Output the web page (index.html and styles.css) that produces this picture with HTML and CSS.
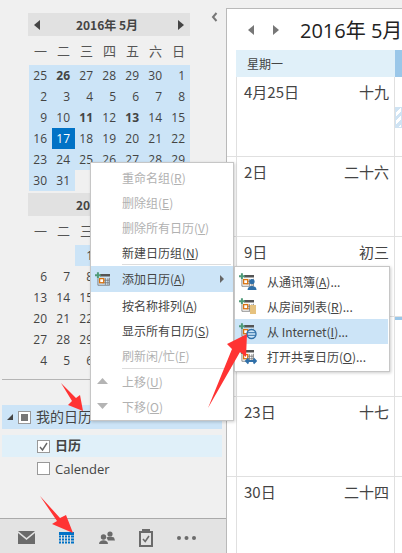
FILE: index.html
```html
<!DOCTYPE html>
<html lang="zh-CN">
<head>
    <meta charset="UTF-8">
    <meta name="viewport" content="width=device-width, initial-scale=1.0">
    <title>日历</title>
    <link rel="stylesheet" href="styles.css">
</head>
<body>
    <svg class="defs" width="0" height="0">
        <symbol id="base-cal" viewBox="0 0 18 16">
            <rect x="6" y="2" width="12" height="3" fill="#555"/>
            <path d="M3.500 7.500v8h14v-9M9 9.500h8M9 12.500h8M12.500 7v8M15.500 7v8" stroke="#777" stroke-width="1" fill="none"/>
            <rect x="5.500" y="7.500" width="5" height="5" fill="#fff" stroke="#d9720f" stroke-width="1.600"/>
            <path d="M0 3.500h7M3.500 0v7" stroke="#4f9a78" stroke-width="2.400" fill="none"/>
        </symbol>
    </svg>

    <div id="sidebar">
        <div class="cal">
            <div class="cal-head">
                <svg class="cal-arrow" width="6" height="10"><path d="M6 0v10L0 5z"/></svg>
                <span class="cal-title">2016年 5月</span>
                <svg class="cal-arrow" width="6" height="10"><path d="M0 0v10l6-5z"/></svg>
            </div>
            <div class="weekdays"><span>一</span><span>二</span><span>三</span><span>四</span><span>五</span><span>六</span><span>日</span></div>
            <div class="dates">
                <span class="on">25</span><span class="on bold">26</span><span class="on">27</span><span class="on">28</span><span class="on">29</span><span class="on">30</span><span class="on">1</span>
                <span class="on">2</span><span class="on">3</span><span class="on">4</span><span class="on">5</span><span class="on">6</span><span class="on">7</span><span class="on">8</span>
                <span class="on">9</span><span class="on">10</span><span class="on bold">11</span><span class="on">12</span><span class="on bold">13</span><span class="on">14</span><span class="on">15</span>
                <span class="on">16</span><span class="today">17</span><span class="on">18</span><span class="on">19</span><span class="on">20</span><span class="on">21</span><span class="on">22</span>
                <span class="on">23</span><span class="on">24</span><span class="on">25</span><span class="on">26</span><span class="on">27</span><span class="on">28</span><span class="on">29</span>
                <span class="on">30</span><span class="on">31</span><span></span><span></span><span></span><span></span><span></span>
            </div>
        </div>
        <div class="cal cal-second">
            <div class="cal-head">
                <span class="cal-spacer"></span>
                <span class="cal-title">2016年 6月</span>
                <span class="cal-spacer"></span>
            </div>
            <div class="weekdays"><span>一</span><span>二</span><span>三</span></div>
            <!-- the days from thursday on sit behind the menu -->
            <div class="dates">
                <span></span><span></span><span class="on">1</span><span></span><span></span><span></span><span></span>
                <span>6</span><span>7</span><span>8</span><span></span><span></span><span></span><span></span>
                <span>13</span><span>14</span><span>15</span><span></span><span></span><span></span><span></span>
                <span>20</span><span>21</span><span>22</span><span></span><span></span><span></span><span></span>
                <span>27</span><span>28</span><span>29</span><span></span><span></span><span></span><span></span>
                <span>4</span><span>5</span><span>6</span><span></span><span></span><span></span><span></span>
            </div>
        </div>

        <div class="divider"></div>

        <div class="group">
            <svg class="twist" width="6" height="6"><path d="M6 0v6H0z"/></svg>
            <span class="check check-mixed"></span>
            <span class="group-name">我的日历</span>
        </div>
        <div class="item item-on">
            <span class="check">
                <svg width="11" height="11" viewBox="0 0 11 11"><path d="M2 6l2.500 3L9 2" stroke="#666" stroke-width="1.400" fill="none"/></svg>
            </span>
            <b>日历</b>
        </div>
        <div class="item">
            <span class="check"></span>
            <span class="latin">Calender</span>
        </div>

        <div id="nav">
            <svg width="17" height="13" viewBox="0 0 17 13"><path d="M0 0h17L8.500 7z" fill="#6b6b6b"/><path d="M0 2v11h17V2L8.500 9z" fill="#6b6b6b"/></svg>
            <svg width="15" height="12" viewBox="0 0 15 12"><rect width="15" height="3" fill="#0072c6"/><path d="M0 4.500h15M0 7.500h15M0 10.500h15" stroke="#0072c6" stroke-width="2"/><path d="M2.500 3v9M5.500 3v9M8.500 3v9M11.500 3v9" stroke="#e3e3e3" stroke-width="1"/></svg>
            <svg width="16" height="13" viewBox="0 0 16 13"><circle cx="11" cy="3" r="2.600" fill="#6b6b6b"/><path d="M7.500 6.500c1-1 6-1 7.500 0l1 3H9z" fill="#6b6b6b"/><circle cx="4.500" cy="6" r="2.700" fill="#6b6b6b"/><path d="M0 13c0-5 9-5 9 0z" fill="#6b6b6b"/></svg>
            <svg width="14" height="18" viewBox="0 0 14 18"><path d="M1 3h3V1h6v2h3v14H1z" fill="none" stroke="#6b6b6b" stroke-width="2"/><rect x="4" y="0" width="6" height="4" fill="#6b6b6b"/><path d="M4 10l2.200 2.500L10 7" fill="none" stroke="#6b6b6b" stroke-width="1.600"/></svg>
            <svg width="19" height="4" viewBox="0 0 19 4"><circle cx="2" cy="2" r="2" fill="#6b6b6b"/><circle cx="9.500" cy="2" r="2" fill="#6b6b6b"/><circle cx="17" cy="2" r="2" fill="#6b6b6b"/></svg>
        </div>
    </div>

    <svg class="collapse" width="7" height="10" viewBox="0 0 7 10"><path d="M5.500 1L2 5l3.500 4" fill="none" stroke="#777" stroke-width="2"/></svg>

    <div id="main">
        <div class="main-head">
            <svg class="main-arrow" width="6" height="10"><path d="M6 0v10L0 5z"/></svg>
            <svg class="main-arrow" width="6" height="10"><path d="M0 0v10l6-5z"/></svg>
            <span class="main-title">2016年 5月</span>
        </div>
        <div class="week-row">
            <div class="week-label">星期一</div>
            <div class="week-side"></div>
        </div>
        <div class="day-row">
            <div class="day"><span>4月25日</span><span>十九</span></div>
            <div class="gutter"><div class="hatch"></div></div>
        </div>
        <div class="day-row">
            <div class="day"><span>2日</span><span>二十六</span></div>
            <div class="gutter"></div>
        </div>
        <div class="day-row">
            <div class="day"><span>9日</span><span>初三</span></div>
            <div class="gutter"></div>
        </div>
        <div class="day-row">
            <div class="day"></div>
            <div class="gutter"><div class="busy"></div></div>
        </div>
        <div class="day-row">
            <div class="day"><span>23日</span><span>十七</span></div>
            <div class="gutter"></div>
        </div>
        <div class="day-row">
            <div class="day"><span>30日</span><span>二十四</span></div>
            <div class="gutter"></div>
        </div>
    </div>

    <div id="menu" class="menu">
        <div class="row off"><span class="row-icon"></span><span>重命名组(<u>R</u>)</span></div>
        <div class="row off"><span class="row-icon"></span><span>删除组(<u>E</u>)</span></div>
        <div class="row off"><span class="row-icon"></span><span>删除所有日历(<u>V</u>)</span></div>
        <div class="row"><span class="row-icon"></span><span>新建日历组(<u>N</u>)</span></div>
        <div class="sep"></div>
        <div class="row row-hot">
            <span class="row-icon"><svg width="15" height="14" viewBox="0 0 15 14"><use href="#base-cal" width="15" height="14"/></svg></span>
            <span>添加日历(<u>A</u>)</span>
            <svg class="more" width="4" height="8"><path d="M0 0v8l4-4z"/></svg>
        </div>
        <div class="row"><span class="row-icon"></span><span>按名称排列(<u>A</u>)</span></div>
        <div class="row"><span class="row-icon"></span><span>显示所有日历(<u>S</u>)</span></div>
        <div class="row off"><span class="row-icon"></span><span>刷新闲/忙(<u>F</u>)</span></div>
        <div class="sep sep-low"></div>
        <div class="row off">
            <span class="row-icon"><svg class="tri" width="11" height="6"><path d="M5.500 0L11 6H0z" fill="#b4b4b4"/></svg></span>
            <span>上移(<u>U</u>)</span>
        </div>
        <div class="row off">
            <span class="row-icon"><svg class="tri" width="11" height="6"><path d="M0 0h11L5.500 6z" fill="#b4b4b4"/></svg></span>
            <span>下移(<u>O</u>)</span>
        </div>
    </div>

    <div id="submenu" class="menu">
        <div class="row">
            <span class="row-icon">
                <svg width="18" height="17" viewBox="0 0 18 17"><use href="#base-cal" width="15" height="14"/><circle cx="13" cy="8.500" r="2.600" fill="#2f6fa8"/><path d="M8.500 17c0-5.500 9-5.500 9 0z" fill="#2f6fa8"/></svg>
            </span>
            <span>从通讯簿(<u>A</u>)...</span>
        </div>
        <div class="row">
            <span class="row-icon">
                <svg width="18" height="17" viewBox="0 0 18 17"><use href="#base-cal" width="15" height="14"/><rect x="11" y="7" width="6" height="9" fill="#e6c27f"/></svg>
            </span>
            <span>从房间列表(<u>R</u>)...</span>
        </div>
        <div class="row row-hot">
            <span class="row-icon">
                <svg width="18" height="17" viewBox="0 0 18 17"><use href="#base-cal" width="15" height="14"/><circle cx="12.500" cy="11" r="4.500" fill="#cde5f7" stroke="#2f6fa8" stroke-width="1.400"/><path d="M8.500 9.700h8M8.500 12.300h8" stroke="#2f6fa8"/></svg>
            </span>
            <span>从 Internet(<u>I</u>)...</span>
        </div>
        <div class="row">
            <span class="row-icon">
                <svg width="18" height="17" viewBox="0 0 18 17"><use href="#base-cal" width="15" height="14"/><path d="M7 13h10M9.500 10.500L7 13l2.500 2.500M14.500 10.500L17 13l-2.500 2.500" fill="none" stroke="#2f6fa8" stroke-width="1.800"/></svg>
            </span>
            <span>打开共享日历(<u>O</u>)...</span>
        </div>
    </div>

    <!-- red arrows drawn on top of the screenshot -->
    <svg id="marks" width="402" height="553">
        <path d="M61 383L76 398L80 395L83 411L68 405L72 401z" fill="#ff3333"/>
        <path d="M40 496L60 518L66 515L73 533L52 524L57 521z" fill="#ff3333"/>
        <path d="M208 408L232 349L227 344L247 334L246 357L240 352z" fill="#ff3333"/>
    </svg>
</body>
</html>
```

FILE: styles.css
```css
* {
    box-sizing: border-box;
}
body {
    margin: 0;
    width: 402px;
    height: 553px;
    overflow: hidden;
    display: flex;
    position: relative;
    background-color: #f0f0f0;
    color: #444;
    font-family: "Open Sans", "Noto Sans CJK SC", sans-serif;
    font-size: 12px;
}
.defs {
    position: absolute;
}

/* left pane */
#sidebar {
    width: 226px;
    height: 553px;
    flex: none;
    display: flex;
    flex-direction: column;
    padding-top: 13px;
}
.collapse {
    position: absolute;
    left: 211px;
    top: 12px;
}
.cal {
    width: 162px;
    margin-left: 28px;
}
.cal-second {
    margin-top: 2px;
}
.cal-head {
    height: 23px;
    display: flex;
    align-items: center;
    justify-content: space-between;
    padding: 0 6px;
    background-color: #e1e1e1;
    font-weight: bold;
    font-family: "Noto Sans CJK SC", sans-serif;
}
.cal-title {
    margin-right: 4px;
}
.cal-arrow {
    fill: #444;
}
.cal-spacer {
    width: 6px;
}
.weekdays {
    height: 29px;
    margin-left: 1px;
    display: grid;
    grid-template-columns: repeat(7, 23px);
    align-items: center;
    text-align: center;
    font-size: 13px;
    color: #555;
    font-family: "Noto Sans CJK SC", sans-serif;
}
.dates {
    margin-left: 1px;
    display: grid;
    grid-template-columns: repeat(7, 23px);
    grid-auto-rows: 21px;
    line-height: 21px;
    text-align: right;
}
.dates span {
    padding-right: 5px;
}
.on {
    background-color: #cce4f7;
}
.bold {
    font-weight: bold;
}
.today {
    background-color: #0072c6;
    color: #fff;
}
.divider {
    height: 1px;
    margin: 8px 0 0 2px;
    background-color: #b5b5b5;
}
.group {
    height: 24px;
    margin: 25px 4px 0 2px;
    display: flex;
    align-items: center;
    background-color: #cce4f7;
    font-size: 14px;
    font-family: "Noto Sans CJK SC", sans-serif;
}
.group-name {
    margin-bottom: 3px;
}
.twist {
    margin: 0 5px 0 5px;
    fill: #444;
}
.check {
    width: 13px;
    height: 13px;
    display: flex;
    align-items: center;
    justify-content: center;
    border: 1px solid #999;
    background-color: #fff;
}
.check-mixed {
    margin-right: 5px;
}
.check-mixed::after {
    content: "";
    width: 7px;
    height: 7px;
    background-color: #777;
}
.item {
    height: 23px;
    margin: 0 4px 0 2px;
    padding-left: 35px;
    display: flex;
    align-items: center;
    font-size: 13px;
    font-family: "Noto Sans CJK SC", sans-serif;
}
.item b, .item .latin {
    margin-left: 5px;
}
.item b {
    margin-bottom: 4px;
}
.item .latin {
    font-family: "Open Sans", sans-serif;
}
.item-on {
    height: 22px;
    margin-top: 6px;
    background-color: #e0f0f9;
}
#nav {
    height: 35px;
    margin-top: auto;
    display: flex;
    align-items: center;
    justify-content: space-between;
    padding: 3px 30px 0 18px;
    border-top: 1px solid #aaa;
    background-color: #e3e3e3;
}

/* right pane */
#main {
    width: 176px;
    height: 545px;
    margin-top: 8px;
    flex: none;
    padding-left: 9px;
    overflow: hidden;
    border-top: 1px solid #b9b9b9;
    border-left: 1px solid #b9b9b9;
    background-color: #fff;
}
.main-head {
    height: 41px;
    display: flex;
    align-items: center;
    padding-left: 12px;
    white-space: nowrap;
}
.main-arrow {
    flex: none;
    margin-right: 19px;
    fill: #777;
}
.main-title {
    margin-left: 2px;
    color: #222;
    font-size: 20px;
}
.week-row {
    height: 27px;
    display: flex;
}
.week-label {
    width: 159px;
    padding-left: 11px;
    line-height: 27px;
    background-color: #e0f0f9;
    font-family: "Noto Sans CJK SC", sans-serif;
}
.week-side {
    flex: 1;
    background-color: #9ac7e9;
}
.day-row {
    height: 80px;
    display: flex;
    margin-left: -10px;
    padding-left: 10px;
    border-bottom: 1px solid #e0e0e0;
}
.day {
    width: 159px;
    display: flex;
    justify-content: space-between;
    padding: 4px 5px 0 7px;
    border-left: 1px solid #e0e0e0;
    border-right: 1px solid #e0e0e0;
    font-size: 15px;
    line-height: 22px;
    font-family: "Noto Sans CJK SC", sans-serif;
}
.gutter {
    flex: 1;
}
.hatch {
    height: 21px;
    margin-top: 30px;
    border: 1px solid #cfe3f3;
    background: repeating-linear-gradient(135deg, #cfe3f3 0 3px, #fff 3px 6px);
}
.busy {
    height: 3px;
    background-color: #9ac7e9;
}

/* context menus */
.menu {
    position: absolute;
    border: 1px solid #c6c6c6;
    background-color: #fff;
    box-shadow: 1px 1px 3px rgba(0, 0, 0, 0.2);
    font-family: "Noto Sans CJK SC", sans-serif;
}
#menu {
    left: 90px;
    top: 162px;
    width: 144px;
    height: 259px;
    padding-top: 2px;
}
#submenu {
    left: 234px;
    top: 266px;
    width: 156px;
    height: 106px;
    padding: 2px 1px 0 0;
}
.row {
    height: 25px;
    display: flex;
    align-items: center;
    padding-bottom: 1px;
    color: #444;
    white-space: nowrap;
}
.row u {
    text-underline-offset: 1px;
}
.row-icon {
    width: 31px;
    flex: none;
    display: flex;
    padding-left: 4px;
}
.row-icon svg {
    display: block;
}
.row-icon .tri {
    margin-left: 2px;
}
#submenu .row-icon {
    width: 32px;
}
.off {
    color: #b1b1b1;
}
.row-hot {
    background-color: #cce4f7;
}
#menu .row-hot {
    height: 26px;
    margin-bottom: 1px;
}
.more {
    margin-left: auto;
    margin-right: 9px;
    fill: #666;
}
.sep {
    height: 1px;
    margin: -1px 2px 1px 31px;
    background-color: #ddd;
}
.sep-low {
    margin: 0 2px 0 31px;
}
#marks {
    position: absolute;
    left: 0;
    top: 0;
    pointer-events: none;
}
```
